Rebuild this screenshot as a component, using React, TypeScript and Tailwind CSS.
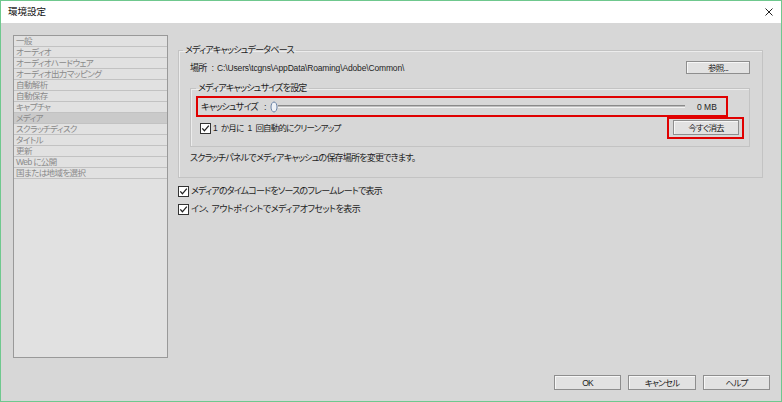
import React from 'react';

const listItems = [
  '一般',
  'オーディオ',
  'オーディオハードウェア',
  'オーディオ出力マッピング',
  '自動解析',
  '自動保存',
  'キャプチャ',
  'メディア',
  'スクラッチディスク',
  'タイトル',
  '更新',
  'Web に公開',
  '国または地域を選択',
];

function CheckBox() {
  return (
    <svg width="11" height="11" viewBox="0 0 11 11" className="shrink-0">
      <rect x="0.5" y="0.5" width="10" height="10" fill="#fff" stroke="#333" />
      <path d="M2.3 5.4 L4.4 7.8 L8.8 2.6" fill="none" stroke="#222" strokeWidth="1.3" />
    </svg>
  );
}

function Btn({ label, className = '' }: { label: string; className?: string }) {
  return (
    <div
      className={`flex items-center justify-center border border-[#8e8e8e] bg-[#e2e2e2] shadow-[inset_1px_1px_0_#f7f7f7] text-[8.5px] text-[#1a1a1a] ${className}`}
    >
      {label}
    </div>
  );
}

export default function App() {
  return (
    <div className="w-[782px] h-[402px] border border-[#6fc88e] flex flex-col overflow-hidden font-['Liberation_Sans','Noto_Sans_CJK_JP',sans-serif] [font-feature-settings:'palt'] text-[9px] tracking-[-0.8px] text-[#1e1e1e] leading-[12px]">
      <div className="h-[22px] shrink-0 bg-white flex items-center justify-between pl-[7px] pr-[8px]">
        <span className="text-[9.5px] tracking-normal text-[#111]">環境設定</span>
        <svg width="8" height="8" viewBox="0 0 8 8">
          <path d="M0.5 0.5 L7.5 7.5 M7.5 0.5 L0.5 7.5" stroke="#222" strokeWidth="1" />
        </svg>
      </div>

      <div className="flex-1 bg-[#d7d7d7] flex flex-col px-[12px] pt-[12px]">
        <div className="flex gap-[10px] h-[323px]">
          {/* category list */}
          <div className="w-[155px] h-full border border-[#999] bg-[#e1e1e1] flex flex-col">
            {listItems.map((item) => (
              <div
                key={item}
                className={`h-[11px] shrink-0 border-b border-[#c2c2c2] pl-[2px] text-[8.5px] tracking-[-0.6px] leading-[10px] text-[#8a8a8a] whitespace-nowrap ${
                  item === 'メディア' ? 'bg-[#cacaca]' : ''
                }`}
              >
                {item}
              </div>
            ))}
          </div>

          {/* settings */}
          <div className="w-[585px] flex flex-col">
            <fieldset className="mt-[9px] border border-[#c3c3c3] shadow-[inset_1px_1px_0_#ececec] pl-[11px] pr-[12px] pb-[13px]">
              <legend className="ml-[-7px] px-[2px] leading-[12px]">メディアキャッシュデータベース</legend>

              <div className="mt-[5px] h-[13px] flex items-center justify-between">
                <div className="flex items-center whitespace-nowrap">
                  <span>場所</span>
                  <span className="ml-[5px]">:</span>
                  <span className="ml-[4px] text-[8.5px] tracking-[-0.15px]">C:\Users\tcgns\AppData\Roaming\Adobe\Common\</span>
                </div>
                <Btn label="参照..." className="w-[64px] h-[13px]" />
              </div>

              <fieldset className="mt-[8px] border border-[#c3c3c3] shadow-[inset_1px_1px_0_#ececec] pl-[5px] pr-[5px] pb-[7px]">
                <legend className="px-[2px] leading-[12px]">メディアキャッシュサイズを設定</legend>

                <div className="mt-[2px] w-[532px] h-[21px] border-2 border-[#e00000] flex items-center pl-[3px]">
                  <div className="w-[69px] shrink-0 flex items-center whitespace-nowrap">
                    <span>キャッシュサイズ</span>
                    <span className="ml-[6px]">:</span>
                  </div>
                  <div className="flex items-center w-[415px]">
                    <svg width="8" height="12" viewBox="0 0 8 12" className="shrink-0">
                      <ellipse cx="4" cy="6" rx="3" ry="5" fill="#eef2f7" stroke="#6b84a8" strokeWidth="1" />
                    </svg>
                    <div className="flex-1 h-[3px] border-t border-[#8a8a8a] border-b border-b-[#f2f2f2] bg-[#bdbdbd]" />
                  </div>
                  <span className="ml-[12px] text-[8.5px] tracking-normal">0 MB</span>
                </div>

                <div className="h-[22px] flex items-center justify-between">
                  <div className="flex items-center gap-[2px] pl-[4px]">
                    <CheckBox />
                    <div className="flex items-center whitespace-nowrap text-[8.5px] tracking-[-0.8px]">
                      <span>1</span>
                      <span className="ml-[4px]">か月に</span>
                      <span className="ml-[4px]">1</span>
                      <span className="ml-[4px]">回自動的にクリーンアップ</span>
                    </div>
                  </div>
                  <div className="w-[77px] h-[22px] border-2 border-[#e00000] pt-[1px] pr-[3px] pb-[2px] pl-[4px]">
                    <Btn label="今すぐ消去" className="w-full h-[15px]" />
                  </div>
                </div>
              </fieldset>

              <div className="mt-[5px] whitespace-nowrap">スクラッチパネルでメディアキャッシュの保存場所を変更できます。</div>
            </fieldset>

            <div className="mt-[6px] h-[14px] flex items-center gap-[2px]">
              <CheckBox />
              <span className="whitespace-nowrap">メディアのタイムコードをソースのフレームレートで表示</span>
            </div>
            <div className="mt-[4px] h-[14px] flex items-center gap-[2px]">
              <CheckBox />
              <span className="whitespace-nowrap tracking-[-0.5px]">イン、 アウトポイントでメディアオフセットを表示</span>
            </div>
          </div>
        </div>

        <div className="mt-[17px] flex justify-end gap-[7px] mr-[-1px]">
          <Btn label="OK" className="w-[67px] h-[15px]" />
          <Btn label="キャンセル" className="w-[68px] h-[15px]" />
          <Btn label="ヘルプ" className="w-[67px] h-[15px]" />
        </div>
      </div>
    </div>
  );
}
